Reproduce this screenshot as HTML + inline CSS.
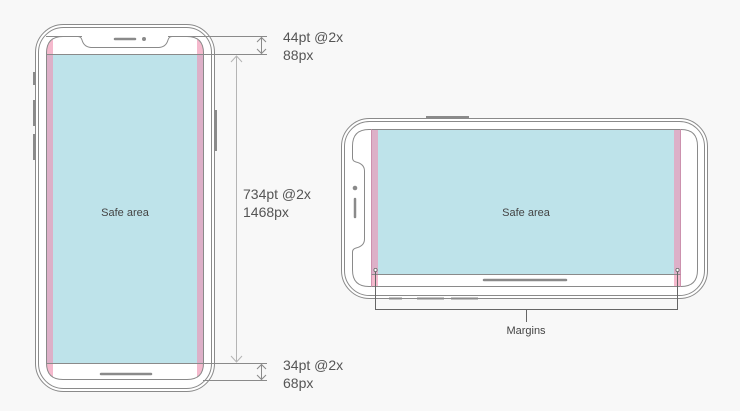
<!DOCTYPE html>
<html><head><meta charset="utf-8"><style>
html,body{margin:0;padding:0;background:#f8f8f8;}
svg{display:block;font-family:"Liberation Sans",sans-serif;}
</style></head><body>
<svg width="740" height="411" viewBox="0 0 740 411" xmlns="http://www.w3.org/2000/svg">
<rect width="740" height="411" fill="#f8f8f8"/>
<g fill="none" stroke="#8a8a8a" stroke-width="1">
<rect x="35.5" y="24.5" width="179" height="367" rx="28" fill="#fff"/>
<rect x="38.5" y="27.5" width="173" height="361" rx="25"/>
</g>
<g stroke="#8a8a8a" stroke-width="2">
<line x1="34" y1="72" x2="34" y2="85"/>
<line x1="34" y1="100" x2="34" y2="126"/>
<line x1="34" y1="134" x2="34" y2="160"/>
<line x1="216" y1="110" x2="216" y2="151"/>
</g>
<clipPath id="ps"><rect x="46" y="36" width="158" height="344" rx="17"/></clipPath>
<g clip-path="url(#ps)">
<rect x="46" y="36" width="158" height="344" fill="#fff"/>
<rect x="46" y="36" width="7" height="344" fill="#f5b9cd"/>
<rect x="197" y="36" width="7" height="344" fill="#f5b9cd"/>
<rect x="46" y="54" width="158" height="309" fill="#bee3ea"/>
<rect x="46" y="54" width="7" height="309" fill="#ddb0c8"/>
<rect x="197" y="54" width="7" height="309" fill="#ddb0c8"/>
</g>
<path d="M63 36.5 H78 Q81 36.5 82 40 Q84 47 91 47.5 H159 Q166 47 168 40 Q169 36.5 172 36.5 H187 Q203.5 36.5 203.5 53 V363 Q203.5 379.5 187 379.5 H63 Q46.5 379.5 46.5 363 V53 Q46.5 36.5 63 36.5 Z" fill="none" stroke="#8a8a8a"/>
<rect x="46" y="36" width="36" height="1" fill="#8a8a8a"/>
<line x1="115" y1="39" x2="135" y2="39" stroke="#8a8a8a" stroke-width="2.5" stroke-linecap="round"/>
<circle cx="144" cy="39" r="2" fill="#8a8a8a"/>
<line x1="101" y1="374" x2="151" y2="374" stroke="#8a8a8a" stroke-width="2.5" stroke-linecap="round"/>
<g stroke="#8a8a8a" stroke-width="1" fill="none">
<line x1="46" y1="54.5" x2="267" y2="54.5"/>
<line x1="168" y1="36.5" x2="267" y2="36.5"/>
<line x1="46" y1="363.5" x2="267" y2="363.5"/>
<line x1="203" y1="380.5" x2="267" y2="380.5"/>
<line x1="261.5" y1="38" x2="261.5" y2="53"/>
<path d="M257 42 L261.5 37.5 L266 42 M257 49 L261.5 53.5 L266 49"/>
<line x1="261.5" y1="365" x2="261.5" y2="379"/>
<path d="M257 369 L261.5 364.5 L266 369 M257 375 L261.5 379.5 L266 375"/>
</g>
<g stroke="#b5b5b5" stroke-width="1" fill="none">
<line x1="236.5" y1="56" x2="236.5" y2="362"/>
<path d="M231 62 L236.5 56 L242 62 M231 356 L236.5 362 L242 356"/>
</g>
<g fill="#555" font-size="14">
<text x="283" y="42">44pt @2x</text>
<text x="283" y="60">88px</text>
<text x="243" y="199">734pt @2x</text>
<text x="243" y="217">1468px</text>
<text x="283" y="370">34pt @2x</text>
<text x="283" y="388">68px</text>
</g>
<text x="125" y="216" font-size="11" fill="#444" text-anchor="middle">Safe area</text>

<g fill="none" stroke="#8a8a8a" stroke-width="1">
<rect x="341.5" y="118.5" width="366" height="180" rx="28" fill="#fff"/>
<rect x="344.5" y="121.5" width="360" height="174" rx="25"/>
</g>
<g stroke="#8a8a8a" stroke-width="2">
<line x1="426" y1="117" x2="469" y2="117"/>
<line x1="389" y1="298.5" x2="402" y2="298.5"/>
<line x1="417" y1="298.5" x2="444" y2="298.5"/>
<line x1="451" y1="298.5" x2="478" y2="298.5"/>
</g>
<clipPath id="ls"><rect x="352" y="129" width="346" height="158" rx="17"/></clipPath>
<g clip-path="url(#ls)">
<rect x="352" y="129" width="346" height="158" fill="#fff"/>
<rect x="371" y="129" width="7" height="158" fill="#f5b9cd"/>
<rect x="674" y="129" width="7" height="158" fill="#f5b9cd"/>
<rect x="378" y="129" width="296" height="145" fill="#bee3ea"/>
<rect x="371" y="129" width="7" height="145" fill="#ddb0c8"/>
<rect x="674" y="129" width="7" height="145" fill="#ddb0c8"/>
</g>
<path d="M369 129.5 H681 Q697.5 129.5 697.5 146 V270 Q697.5 286.5 681 286.5 H369 Q352.5 286.5 352.5 270 V252 Q352.5 249 356 248 Q364.5 246 364.5 239 V171 Q364.5 164 356 162 Q352.5 161 352.5 158 V146 Q352.5 129.5 369 129.5 Z" fill="none" stroke="#8a8a8a"/>
<line x1="371" y1="274.5" x2="681" y2="274.5" stroke="#8a8a8a"/>
<line x1="371.5" y1="129" x2="371.5" y2="287" stroke="#c98aa8" stroke-width="0.8"/>
<line x1="680.5" y1="129" x2="680.5" y2="287" stroke="#c98aa8" stroke-width="0.8"/>
<circle cx="355" cy="188" r="2.3" fill="#8a8a8a"/>
<line x1="355" y1="199" x2="355" y2="217" stroke="#8a8a8a" stroke-width="2.5" stroke-linecap="round"/>
<line x1="484" y1="280" x2="566" y2="280" stroke="#8a8a8a" stroke-width="2.5" stroke-linecap="round"/>
<text x="526" y="216" font-size="11" fill="#444" text-anchor="middle">Safe area</text>
<g stroke="#666" stroke-width="1" fill="none">
<path d="M375.5 270 V309.5 H677.5 V270"/>
<line x1="526.5" y1="309" x2="526.5" y2="322"/>
</g>
<circle cx="375.5" cy="270" r="1.6" fill="#fff" stroke="#666" stroke-width="0.8"/>
<circle cx="677.5" cy="270" r="1.6" fill="#fff" stroke="#666" stroke-width="0.8"/>
<text x="526" y="334" font-size="11" fill="#444" text-anchor="middle">Margins</text>
</svg>
</body></html>
